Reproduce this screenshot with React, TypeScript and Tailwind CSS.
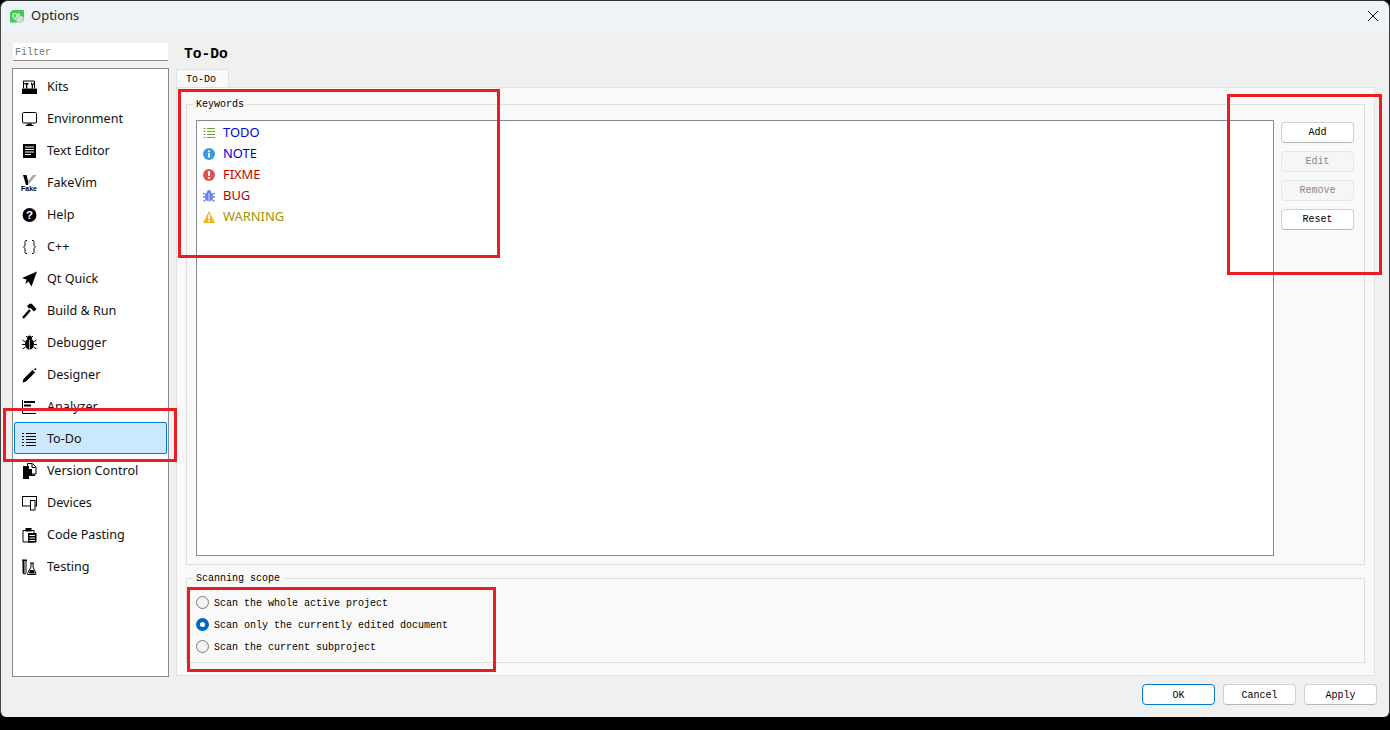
import type { ReactNode } from "react"

const Icon = ({ children }: { children: ReactNode }) => (
  <svg width="16" height="16" viewBox="0 0 16 16" className="shrink-0">
    {children}
  </svg>
)

const navItems: { label: string; icon: ReactNode }[] = [
  {
    label: "Kits",
    icon: (
      <>
        <path d="M2.500 9V2h11v7" fill="none" stroke="#000" />
        <rect x="1" y="9.500" width="15" height="5.500" />
        <path d="M3.500 4h4v1.500h-1.200V9.500H5V5.500H3.500zM10 3.500v2l.7.7v3.300H12V6.200l.7-.7v-2h-.9v1.500h-.9V3.500z" />
      </>
    ),
  },
  {
    label: "Environment",
    icon: (
      <>
        <rect x="1.500" y="1.500" width="14" height="10.500" rx="1" fill="none" stroke="#000" />
        <path d="M6.500 12.500h4l.5 1.500h1.500v1H4.500v-1H6z" />
      </>
    ),
  },
  {
    label: "Text Editor",
    icon: (
      <>
        <rect x="2" y="1" width="13" height="14" />
        <path d="M4 4h9M4 6.500h9M4 9h9M4 11.500h6" stroke="#fff" />
      </>
    ),
  },
  {
    label: "FakeVim",
    icon: (
      <>
        <path d="M2 0h3.500l1.500 6L7 10H5z" />
        <path d="M7 6l5-6h3.500L7 10z" fill="#aaa" />
        <text x="0" y="15.500" fontSize="7" fontWeight="700" fontFamily="Liberation Sans, sans-serif">Fake</text>
      </>
    ),
  },
  {
    label: "Help",
    icon: (
      <>
        <circle cx="8.500" cy="8" r="7" />
        <text x="8.500" y="12" textAnchor="middle" fontSize="11.500" fontWeight="700" fill="#fff" fontFamily="Liberation Sans, sans-serif">?</text>
      </>
    ),
  },
  {
    label: "C++",
    icon: (
      <path
        d="M6 1.500H5C4 1.500 4 2.500 4 3.500v2.500C4 7 3.500 7.500 2.500 8 3.500 8.500 4 9 4 10v2.500c0 1 0 2 1 2h1M11 1.500h1c1 0 1 1 1 2v2.500c0 1 .5 1.500 1.500 2-1 .5-1.500 1-1.500 2v2.500c0 1 0 2-1 2h-1"
        fill="none"
        stroke="#000"
      />
    ),
  },
  {
    label: "Qt Quick",
    icon: <path d="M16 0.500 1 7l4.500 1.500L4.500 13l3-2.500L10.500 15.500z" />,
  },
  {
    label: "Build & Run",
    icon: (
      <>
        <path d="M2 15L9 7" stroke="#000" strokeWidth="2.400" />
        <path d="M6 3l3-2.500 2 .5 4.500 5-2.500 2.500L9.500 5 8 5.500z" />
      </>
    ),
  },
  {
    label: "Debugger",
    icon: (
      <>
        <ellipse cx="8.500" cy="9" rx="4.500" ry="5.500" />
        <circle cx="8.500" cy="3" r="2.500" />
        <path d="M5 1l2 2M12 1l-2 2M1.500 5l3 2M15.500 5l-3 2M1 9.500h3M13 9.500h3M1.500 14l3-2M15.500 14l-3-2" stroke="#000" />
        <path d="M8.500 5v9" stroke="#fff" strokeWidth=".7" />
      </>
    ),
  },
  {
    label: "Designer",
    icon: (
      <>
        <path d="M1.500 15.500l1-3.500 9-9 2.500 2.500-9 9z" />
        <path d="M13.500 3L15 1.500" stroke="#000" strokeWidth="1.500" />
      </>
    ),
  },
  {
    label: "Analyzer",
    icon: (
      <>
        <path d="M1.500 1v13.500H15" fill="none" stroke="#000" />
        <path d="M3 2h11v2H3zM3 5.500h7v2H3zM3 9h9v2H3z" />
      </>
    ),
  },
  {
    label: "To-Do",
    icon: <path d="M1 2.500h2M5 2.500h10M1 5.500h2M5 5.500h10M1 8.500h2M5 8.500h10M1 11.500h2M5 11.500h10M1 14.500h2M5 14.500h10" stroke="#000" />,
  },
  {
    label: "Version Control",
    icon: (
      <>
        <path d="M6.500 .5h5l3.500 3.500v7H6.500z" fill="#fff" stroke="#000" />
        <path d="M11 1v3.500h3.500" fill="none" stroke="#000" />
        <path d="M2 3h6v3h3v5.500h3V13H8v3H2z" />
      </>
    ),
  },
  {
    label: "Devices",
    icon: (
      <>
        <rect x="1.500" y="1.500" width="14" height="9.500" fill="none" stroke="#000" />
        <rect x="9.500" y="5.500" width="4.500" height="9.500" fill="#fff" stroke="#000" />
      </>
    ),
  },
  {
    label: "Code Pasting",
    icon: (
      <>
        <path d="M2 3.500h11V15H2z" fill="none" stroke="#000" />
        <rect x="4.500" y="1" width="6" height="3.500" />
        <path d="M7 6h8.500v9.500H7z" />
        <path d="M8.500 8.500h5.500M8.500 11h5.500M8.500 13.500h5.500" stroke="#fff" />
      </>
    ),
  },
  {
    label: "Testing",
    icon: (
      <>
        <path d="M1 .500h5v1.500H1z" />
        <path d="M2 2v11.500a1.500 1.500 0 0 0 3 0V2" fill="none" stroke="#000" />
        <path d="M2 2h1.500v13H2z" />
        <path d="M9 4h4M10 4v4l-3.500 6.500v1H15v-1L12 8V4" fill="none" stroke="#000" />
        <path d="M9 11h3.500l1.500 3.500H8z" />
      </>
    ),
  },
]

const keywords: { label: string; color: string; icon: ReactNode }[] = [
  {
    label: "TODO",
    color: "text-[#0000d8]",
    icon: <path d="M0.500 1.500h2M4 1.500h8M0.500 4.500h2M4 4.500h8M0.500 7.500h2M4 7.500h8M0.500 10.500h2M4 10.500h8" stroke="#6ca22e" />,
  },
  {
    label: "NOTE",
    color: "text-[#0000d8]",
    icon: (
      <>
        <circle cx="6" cy="6" r="6" fill="#3a9be0" />
        <path d="M5 2.500h2v1.800H5zM5 5.300h2v4.200H5z" fill="#fff" />
      </>
    ),
  },
  {
    label: "FIXME",
    color: "text-[#c00000]",
    icon: (
      <>
        <circle cx="6" cy="6" r="6" fill="#e05252" />
        <path d="M5 2.200h2v4.800H5zM5 8h2v1.800H5z" fill="#fff" />
      </>
    ),
  },
  {
    label: "BUG",
    color: "text-[#b80000]",
    icon: (
      <>
        <ellipse cx="6" cy="6.500" rx="4" ry="5" fill="#6a80f4" />
        <circle cx="6" cy="2" r="2" fill="#6a80f4" />
        <path d="M0 3l2.500 1.500M12 3L9.500 4.500M0 7h2.500M12 7H9.500M0.500 11.500l2.500-2M11.500 11.500L9 9.500" stroke="#6a80f4" strokeWidth="1.400" />
        <path d="M6 3v8" stroke="#fff" strokeWidth=".7" />
      </>
    ),
  },
  {
    label: "WARNING",
    color: "text-[#a59300]",
    icon: (
      <>
        <path d="M6 0l6 12H0z" fill="#ecb81f" />
        <path d="M5.100 3.500h1.800v4.800H5.100zM5.100 9h1.800v1.800H5.100z" fill="#fff" />
      </>
    ),
  },
]

const actions = [
  { label: "Add", disabled: false },
  { label: "Edit", disabled: true },
  { label: "Remove", disabled: true },
  { label: "Reset", disabled: false },
]

const scopes = [
  { label: "Scan the whole active project", checked: false },
  { label: "Scan only the currently edited document", checked: true },
  { label: "Scan the current subproject", checked: false },
]

const mono = "font-['Liberation_Mono',monospace] text-[10px]"

function Radio({ checked }: { checked: boolean }) {
  return checked ? (
    <span className="flex h-[13px] w-[13px] items-center justify-center rounded-full bg-[#0067c0]">
      <span className="h-[5px] w-[5px] rounded-full bg-white" />
    </span>
  ) : (
    <span className="h-[13px] w-[13px] rounded-full border border-[#7b7b7b] bg-[#f3f3f3]" />
  )
}

function Footer({ label, primary }: { label: string; primary?: boolean }) {
  return (
    <button
      className={`h-[21px] w-[73px] rounded-[4px] border bg-white pt-px text-black ${mono} ${
        primary ? "border-[#0078d4]" : "border-[#d0d0d0] border-b-[#b8b8b8]"
      }`}
    >
      {label}
    </button>
  )
}

// annotation boxes drawn on top of the dialog
const RedBox = ({ className }: { className: string }) => (
  <div className={`pointer-events-none absolute border-[3px] border-[#ed1c24] ${className}`} />
)

export default function App() {
  return (
    <div className="relative h-[730px] w-[1390px] overflow-hidden bg-black font-['Noto_Sans',sans-serif]">
      <div className="flex h-[717px] flex-col rounded-t-[8px] rounded-b-[6px] border border-b-0 border-[#444] border-t-[#333] bg-[#f0f0f0]">
        {/* title bar */}
        <div className="flex h-[30px] shrink-0 items-center rounded-t-[8px] bg-[#eef3f7] pl-[9px] pr-[10px]">
          <svg width="15" height="13" viewBox="0 0 15 13" className="shrink-0">
            <path d="M2.500 0H14v10l-2.500 2.500H0V2.500z" fill="#41cd52" />
            <text x="2" y="8" fontSize="7" fontWeight="700" fill="#fff" fontFamily="Liberation Sans, sans-serif">Qt</text>
            <ellipse cx="10" cy="9.500" rx="4" ry="2.800" fill="#d5dad5" transform="rotate(-40 10 9.500)" />
          </svg>
          <span className="ml-[6px] text-[13px] text-[#222]">Options</span>
          <svg width="12" height="12" viewBox="0 0 12 12" className="ml-auto">
            <path d="M1 1l10 10M11 1L1 11" stroke="#111" strokeWidth="1" fill="none" />
          </svg>
        </div>

        <div className="flex min-h-0 flex-1 pl-[11px] pr-[14px]">
          {/* left column */}
          <div className="flex w-[157px] shrink-0 flex-col pt-[12px]">
            <input
              readOnly
              placeholder="Filter"
              className={`ml-px h-[18px] w-[155px] shrink-0 border-b border-[#8a8a8a] bg-white px-[2px] pt-[2px] outline-none placeholder:text-[#777] ${mono}`}
            />
            <div className="mt-[7px] flex flex-1 flex-col border border-[#868a91] bg-white py-[2px] pl-px pr-px">
              {navItems.map((item) => {
                const active = item.label === "To-Do"
                return (
                  <div
                    key={item.label}
                    className={`flex h-[32px] shrink-0 items-center gap-[10px] rounded-[2px] border pl-[6px] text-[12.6px] text-[#111] ${
                      active ? "-mt-px mb-px border-[#0078d4] bg-[#cce8ff] pt-[2px]" : "border-transparent"
                    }`}
                  >
                    <Icon>{item.icon}</Icon>
                    <span>{item.label}</span>
                  </div>
                )
              })}
            </div>
          </div>

          {/* right column */}
          <div className="ml-[7px] flex min-w-0 flex-1 flex-col pb-[1px]">
            <div className="h-[38px] shrink-0 pl-[8px] pt-[15px] font-['Liberation_Mono',monospace] text-[14.6px] leading-[16px] font-bold text-black">
              To-Do
            </div>
            <div className={`h-[19px] w-[53px] shrink-0 border border-b-0 border-[#e2e2e2] bg-[#f9f9f9] pl-[9px] pt-px leading-[17px] text-black ${mono}`}>
              To-Do
            </div>
            <div className="-mt-px flex min-h-0 flex-1 flex-col gap-[6px] border border-[#e2e2e2] bg-[#f9f9f9] px-[9px] pt-[9px] pb-[12px]">
              <fieldset className="flex min-h-0 flex-1 flex-col border border-[#dedede]">
                <legend className={`ml-[6px] h-[14px] px-[3px] pt-px leading-[14px] text-black ${mono}`}>Keywords</legend>
                <div className="flex min-h-0 flex-1 pt-[9px] pr-[10px] pb-[8px] pl-[9px]">
                  <div className="flex flex-1 flex-col border border-[#868a91] bg-white pt-[1px] pl-[6px]">
                    {keywords.map((k) => (
                      <div key={k.label} className={`flex h-[21px] items-center gap-[8px] text-[12.9px] ${k.color}`}>
                        <svg width="12" height="12" viewBox="0 0 12 12" className="shrink-0">
                          {k.icon}
                        </svg>
                        <span>{k.label}</span>
                      </div>
                    ))}
                  </div>
                  <div className="ml-[7px] flex w-[73px] shrink-0 flex-col gap-[8px] pt-[2px]">
                    {actions.map((a) => (
                      <button
                        key={a.label}
                        className={`h-[21px] rounded-[4px] border ${mono} ${
                          a.disabled
                            ? "border-[#e6e6e6] bg-[#f6f6f6] text-[#888]"
                            : "border-[#d0d0d0] border-b-[#b8b8b8] bg-white text-black"
                        }`}
                      >
                        {a.label}
                      </button>
                    ))}
                  </div>
                </div>
              </fieldset>
              <fieldset className="h-[92px] shrink-0 border border-[#dedede]">
                <legend className={`ml-[6px] h-[14px] px-[3px] pt-px leading-[14px] text-black ${mono}`}>Scanning scope</legend>
                <div className="flex flex-col pt-[6px] pl-[9px]">
                  {scopes.map((s) => (
                    <label key={s.label} className={`flex h-[22px] items-center gap-[5px] text-black ${mono}`}>
                      <Radio checked={s.checked} />
                      <span className="pt-[3px]">{s.label}</span>
                    </label>
                  ))}
                </div>
              </fieldset>
            </div>
          </div>
        </div>

        {/* dialog buttons */}
        <div className="flex h-[40px] shrink-0 justify-end gap-[8px] pt-[7px] pr-[12px]">
          <Footer label="OK" primary />
          <Footer label="Cancel" />
          <Footer label="Apply" />
        </div>
      </div>

      <RedBox className="left-[178px] top-[89px] h-[169px] w-[322px]" />
      <RedBox className="left-[1227px] top-[94px] h-[181px] w-[155px]" />
      <RedBox className="left-[3px] top-[408px] h-[54px] w-[174px]" />
      <RedBox className="left-[187px] top-[587px] h-[85px] w-[309px]" />
    </div>
  )
}
